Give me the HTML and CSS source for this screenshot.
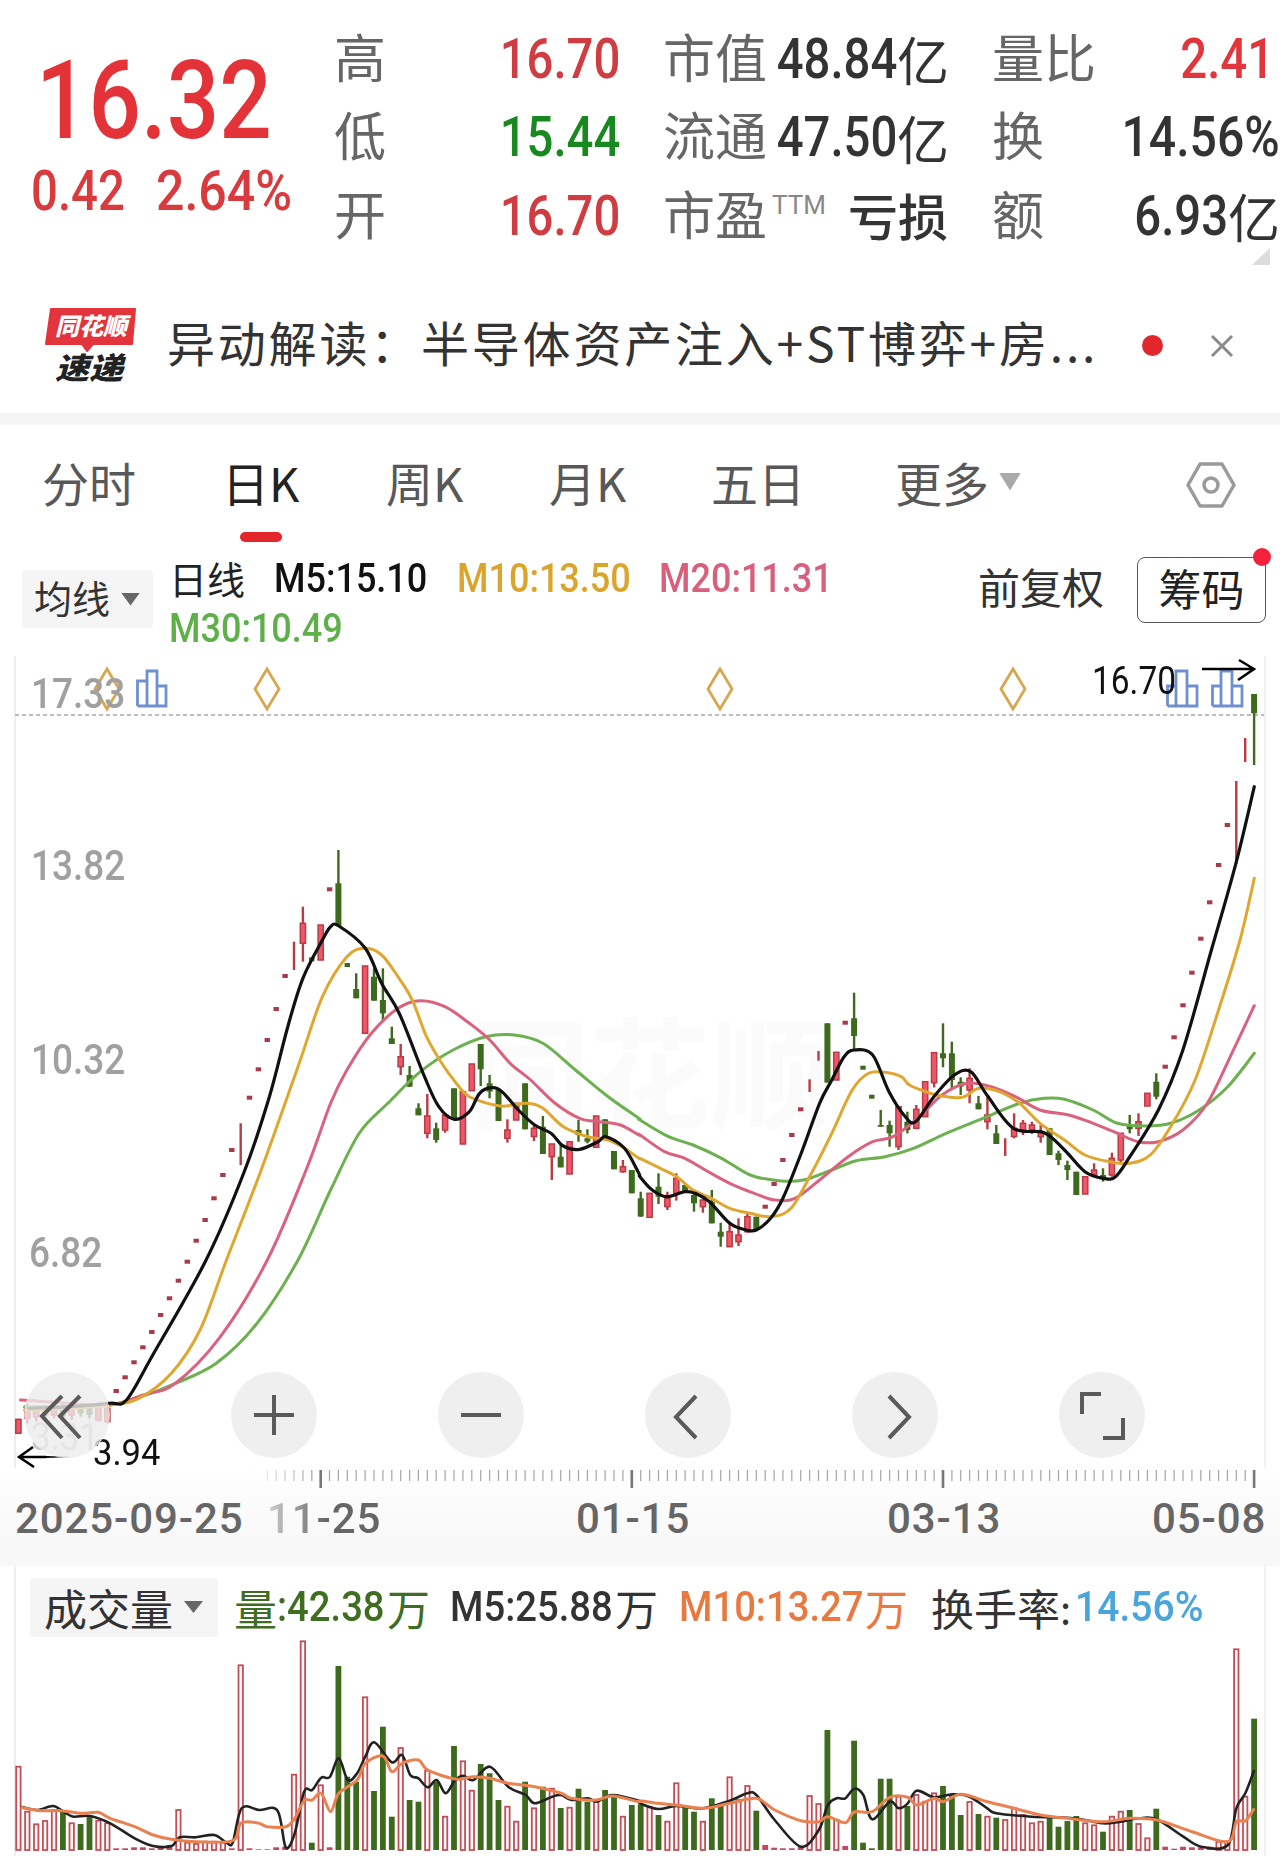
FILE: index.html
```html
<!DOCTYPE html>
<html lang="zh">
<head>
<meta charset="utf-8">
<title>行情</title>
<link rel="stylesheet" href="styles.css">
</head>
<body>
<div class="page">
  <section class="quote">
    <div class="price-box">
      <div class="num price">16.32</div>
      <div class="change"><span class="num chg chg-a">0.42</span><span class="num chg chg-b">2.64%</span></div>
    </div>
    <div class="stats">
      <div class="cell"><span class="lab">高</span><span class="val"><span class="num vn up">16.70</span></span></div>
      <div class="cell"><span class="lab">市值</span><span class="val"><span class="num vn">48.84</span><span class="yi">亿</span></span></div>
      <div class="cell"><span class="lab">量比</span><span class="val val-inset"><span class="num vn hot">2.41</span></span></div>
      <div class="cell"><span class="lab">低</span><span class="val"><span class="num vn down">15.44</span></span></div>
      <div class="cell"><span class="lab">流通</span><span class="val"><span class="num vn">47.50</span><span class="yi">亿</span></span></div>
      <div class="cell"><span class="lab">换</span><span class="val"><span class="num vn vn-wide">14.56%</span></span></div>
      <div class="cell"><span class="lab">开</span><span class="val"><span class="num vn up">16.70</span></span></div>
      <div class="cell"><span class="lab">市盈<span class="ttm">TTM</span></span><span class="val loss">亏损</span></div>
      <div class="cell"><span class="lab">额</span><span class="val"><span class="num vn">6.93</span><span class="yi">亿</span></span></div>
    </div>
    <i class="corner"></i>
  </section>

  <section class="banner">
    <svg class="logo" viewBox="0 0 91 80" aria-label="同花顺速递">
      <path class="logo-badge" d="M6 1H90L87 36H48L42 43L37 36H1Z"/>
      <text class="logo-top" x="10" y="27" textLength="72" lengthAdjust="spacingAndGlyphs">同花顺</text>
      <text class="logo-bot" x="10" y="71" textLength="68" lengthAdjust="spacingAndGlyphs">速递</text>
    </svg>
    <div class="banner-text">异动解读：半导体资产注入+ST博弈+房...</div>
    <i class="banner-dot"></i>
    <svg class="banner-x" viewBox="0 0 24 24"><path d="M2 2L22 22M22 2L2 22"/></svg>
  </section>
  <div class="strip"></div>

  <nav class="tabs">
    <span class="tab">分时</span>
    <span class="tab tab-on">日K</span>
    <span class="tab">周K</span>
    <span class="tab">月K</span>
    <span class="tab">五日</span>
    <span class="tab tab-more">更多<i class="tri-more"></i></span>
    <svg class="hex" viewBox="0 0 50 48"><path d="M2 24L14 3H36L48 24L36 45H14Z"/><circle cx="25" cy="24" r="7"/></svg>
  </nav>

  <section class="toolbar">
    <div class="pill pill-ma"><span>均线</span><i class="tri"></i></div>
    <div class="legend">
      <div class="legend-row">
        <span class="leg-day">日线</span>
        <span class="leg-slot s181"><span class="num lg">M5:15.10</span></span>
        <span class="leg-slot s201"><span class="num lg c-y">M10:13.50</span></span>
        <span class="leg-slot"><span class="num lg c-p">M20:11.31</span></span>
      </div>
      <div class="legend-row"><span class="num lg c-g">M30:10.49</span></div>
    </div>
    <div class="tool-right">
      <span class="adj">前复权</span>
      <span class="chips"><span class="chips-text">筹码</span></span>
    </div>
  </section>

  <section class="chart">
    <svg class="main-svg" id="mainSvg" viewBox="0 656 1280 812">
      <text class="wm" x="470" y="1120">同花顺</text>
      <line class="dash" x1="15" y1="715" x2="1264" y2="715"/>
      <g id="candles"></g>
      <g id="lines"></g>
      <g class="dia">
        <path d="M107 669L95 689L107 709L119 689Z"/>
        <path d="M267 669L255 689L267 709L279 689Z"/>
        <path d="M720 669L708 689L720 709L732 689Z"/>
        <path d="M1013 669L1001 689L1013 709L1025 689Z"/>
      </g>
      <g class="barsicon">
        <path d="M137.500 706V681H147V706M147 706V671H157V706M157 706V686H166V706H137.500"/>
        <path d="M1167.500 706V686H1176V706M1176 706V671H1187V706M1187 706V686H1197V706H1167.500"/>
        <path d="M1212.500 706V686H1221V706M1221 706V671H1232V706M1232 706V686H1242V706H1212.500"/>
      </g>
      <path class="arrow" d="M1202 669H1253M1239 660L1254 669L1238 680"/>
      <defs><linearGradient id="fadeArrow" x1="0" x2="1" y1="0" y2="0"><stop offset="0" stop-color="#000"/><stop offset="1" stop-color="#000" stop-opacity=".1"/></linearGradient></defs>
      <path class="arrow-back" d="M33 1447L19 1457L34 1467M20 1457H46"/>
      <rect class="arrow-tail" x="46" y="1456" width="24" height="2"/>
    </svg>
    <span class="num yl yl-1">17.33</span>
    <span class="num yl yl-2">13.82</span>
    <span class="num yl yl-3">10.32</span>
    <span class="num yl yl-4">6.82</span>
    <span class="num hi-label">16.70</span>
    <span class="num lo-ghost">3.31</span>
    <span class="num lo-label">3.94</span>
    <div class="controls">
      <span class="ctl ctl-ghost"><svg viewBox="0 0 86 86"><path d="M38 24L18 44L38 66M56 24L36 44L56 66"/></svg></span>
      <span class="ctl"><svg viewBox="0 0 86 86"><path d="M23 43H63M43 23V63"/></svg></span>
      <span class="ctl"><svg viewBox="0 0 86 86"><path d="M23 43H63"/></svg></span>
      <span class="ctl"><svg viewBox="0 0 86 86"><path d="M51 24L31 45L51 66"/></svg></span>
      <span class="ctl"><svg viewBox="0 0 86 86"><path d="M37 24L57 45L37 66"/></svg></span>
      <span class="ctl"><svg viewBox="0 0 86 86"><path d="M42 22H23V42M44 66H64V46"/></svg></span>
    </div>
  </section>

  <section class="axis">
    <svg class="ticks" id="ticks" viewBox="0 1468 1280 22"></svg>
    <div class="dates">
      <span class="date d1">2025-09-25</span>
      <span class="date d2">11-25</span>
      <span class="date d3">01-15</span>
      <span class="date d4">03-13</span>
      <span class="date">05-08</span>
    </div>
  </section>

  <section class="volume">
    <div class="vol-legend">
      <div class="pill pill-vol"><span>成交量</span><i class="tri"></i></div>
      <span class="vi vi-1 c-vol"><span class="vcjk">量</span><span class="num vnum w-110">:42.38</span><span class="vcjk">万</span></span>
      <span class="vi vi-2"><span class="num vnum w-165">M5:25.88</span><span class="vcjk">万</span></span>
      <span class="vi vi-3 c-ora"><span class="num vnum w-186">M10:13.27</span><span class="vcjk">万</span></span>
      <span class="vi vi-4"><span class="vcjk">换手率</span><span class="colon">:</span></span>
      <span class="vi c-blue"><span class="num vnum vnum-pct">14.56%</span></span>
    </div>
    <svg class="vol-svg" id="volSvg" viewBox="0 1640 1280 216"></svg>
  </section>
</div>
<script src="script.js"></script>
</body>
</html>
```
FILE: styles.css
```css
* { box-sizing: border-box; }
html, body { margin: 0; padding: 0; background: #fff; }
body { font-family: "Noto Sans CJK SC", "Noto Sans", sans-serif; color: #333; }
.page { width: 1280px; height: 1856px; overflow: hidden; }
i { display: block; }
.num { display: inline-block; font-family: Roboto, "Liberation Sans", sans-serif; white-space: nowrap; line-height: 1; }

/* quote header */
.quote { position: relative; display: flex; height: 270px; }
.price-box { width: 337px; flex: none; }
.price { display: block; margin: 46px 0 0 36px; font-size: 110px; line-height: 110px; font-weight: 500; color: #e33238; transform: scaleX(.84); transform-origin: left center; }
.change { display: flex; margin: 8px 0 0 31px; }
.chg { font-size: 55px; font-weight: 500; color: #d83a3e; transform-origin: left center; }
.chg-a { width: 125px; transform: scaleX(.86); }
.chg-b { transform: scaleX(.91); }
.stats { display: grid; grid-template-columns: 281px 283px 285px; grid-auto-rows: 78.5px; column-gap: 46px; padding-top: 20px; margin-left: -1px; }
.cell { display: flex; align-items: center; justify-content: space-between; }
.cell:nth-child(3n+1) .lab { margin-left: -2px; }
.lab { font-size: 52px; line-height: 1; color: #666; white-space: nowrap; display: flex; align-items: flex-start; margin-bottom: 7px; flex: none; }
.ttm { font-family: Roboto, sans-serif; font-size: 26px; line-height: 1; font-weight: 400; color: #888; margin: 5px 0 0 5px; }
.val { display: flex; align-items: center; color: #333; flex: none; margin-right: -3px; }
.val-inset { margin-right: 3px; }
.vn { font-size: 55px; font-weight: 500; margin-left: -40px; transform: scaleX(.86); transform-origin: right center; }
.vn-wide { transform: scaleX(.876); }
.up { color: #cf3d43; }
.down { color: #18891f; }
.hot { color: #e1363c; }
.yi { font-size: 52px; line-height: 1; color: #333; }
.loss { font-size: 50px; line-height: 1; font-weight: 500; margin: 0 -2px 4px 0; }
.corner { position: absolute; left: 1252px; top: 248px; width: 18px; height: 17px; background: #dcdcdc; clip-path: polygon(100% 0, 100% 100%, 0 100%); }

/* banner */
.banner { display: flex; align-items: center; height: 143px; padding: 0 46px 0 45px; }
.logo { width: 91px; height: 80px; flex: none; margin-top: 13px; overflow: visible; }
.logo-badge { fill: #e2343a; stroke: #e2343a; stroke-width: 2; stroke-linejoin: round; }
.logo-top { font-size: 24px; font-weight: 900; font-style: italic; fill: #fff; }
.logo-bot { font-size: 30px; font-weight: 900; font-style: italic; fill: #222; }
.banner-text { flex: 1; min-width: 0; margin-left: 31px; font-size: 48px; letter-spacing: 2.800px; line-height: 1.2; color: #333; white-space: nowrap; }
.banner-dot { width: 21px; height: 21px; margin-top: 8px; border-radius: 50%; background: #e3262b; flex: none; }
.banner-x { width: 24px; height: 24px; margin: 8px 0 0 47px; flex: none; }
.banner-x path { fill: none; stroke: #8a8a8a; stroke-width: 3; }
.strip { height: 12px; background: #f5f5f5; }

/* tabs */
.tabs { display: grid; grid-template-columns: 180px 164px 163px 162px 184px 291px 50px; align-items: start; height: 120px; padding: 33px 0 0 42px; }
.tab { position: relative; font-size: 47px; line-height: 48px; color: #585858; white-space: nowrap; }
.tab-on { color: #222; }
.tab-on::after { content: ""; position: absolute; left: 18px; top: 74px; width: 42px; height: 10px; border-radius: 5px; background: #e3262b; }
.tab-more { display: flex; align-items: center; }
.tri-more { width: 22px; height: 18px; margin: 0 0 1px 10px; background: #aaa; clip-path: polygon(0 0, 100% 0, 50% 100%); }
.hex { width: 50px; height: 48px; margin-top: 3px; }
.hex path, .hex circle { fill: none; stroke: #9a9a9a; stroke-width: 3.500; stroke-linejoin: round; }

/* toolbar */
.toolbar { display: flex; align-items: flex-start; height: 111px; padding: 0 14px 0 22px; }
.pill { display: flex; align-items: center; background: #f5f5f5; border-radius: 4px; color: #333; }
.tri { background: #666; clip-path: polygon(0 0, 100% 0, 50% 100%); }
.pill-ma { width: 131px; height: 58px; margin-top: 25px; padding: 0 0 4px 12px; font-size: 38px; line-height: 1; }
.pill-ma .tri { width: 19px; height: 13px; margin: 4px 0 0 11px; }
.legend { margin: 9px 0 0 16px; }
.legend-row { display: flex; align-items: center; height: 50px; }
.leg-day { width: 105px; padding: 0 0 2px 0; font-size: 38px; line-height: 1; color: #222; }
.leg-slot { display: block; }
.s181 { width: 183px; }
.s201 { width: 202px; }
.lg { font-size: 40px; font-weight: 500; color: #111; transform: scaleX(.9); transform-origin: left center; }
.c-y { color: #dba52c; }
.c-p { color: #d9607d; }
.c-g { color: #5fb04a; }
.tool-right { display: flex; align-items: flex-start; margin: 12px 0 0 auto; }
.adj { font-size: 42px; line-height: 1; color: #333; margin: 8px 33px 0 0; }
.chips { position: relative; display: block; width: 129px; height: 66px; padding-top: 8px; text-align: center; border: 1.500px solid #555; border-radius: 8px; font-size: 43px; line-height: 1; color: #222; }
.chips::after { content: ""; position: absolute; right: -6px; top: -10px; width: 18px; height: 18px; border-radius: 50%; background: #f3213c; }

/* price chart */
.chart, .volume { background: linear-gradient(#eee, #eee) 14px 0 / 2px 100% no-repeat, linear-gradient(#f3f3f3, #f3f3f3) 1264px 0 / 2px 100% no-repeat, #fff; }
.chart { position: relative; height: 812px; }
.main-svg { display: block; width: 1280px; height: 812px; }
.wm { font-size: 120px; font-weight: 700; fill: #fbfbfb; }
.dash { stroke: #a8a8a8; stroke-width: 1.500; stroke-dasharray: 4 3; }
.dia path { fill: none; stroke: #d9a650; stroke-width: 2.800; }
.barsicon path { fill: none; stroke: #6f8fcf; stroke-width: 2.800; }
.arrow { fill: none; stroke: #000; stroke-width: 2.500; }
.arrow-back { fill: none; stroke: #000; stroke-width: 2.500; }
.arrow-tail { fill: url(#fadeArrow); }
.yl { position: absolute; font-size: 42px; font-weight: 500; color: #a0a0a0; transform: scaleX(.88); transform-origin: left center; }
.yl-1 { left: 31px; top: 17px; }
.yl-2 { left: 31px; top: 189px; }
.yl-3 { left: 31px; top: 383px; }
.yl-4 { left: 29px; top: 576px; }
.hi-label { position: absolute; left: 1092px; top: 6px; font-size: 38px; color: #111; transform: scaleX(.88); transform-origin: left center; }
.lo-label { position: absolute; left: 93px; top: 779px; font-size: 36px; color: #111; transform: scaleX(.96); transform-origin: left center; }
.lo-ghost { position: absolute; left: 31px; top: 762px; font-size: 38px; color: #c9c9c9; transform: scaleX(.92); transform-origin: left center; }
.controls { position: absolute; left: 24px; top: 716px; display: flex; gap: 121px; }
.ctl { display: block; width: 86px; height: 86px; border-radius: 50%; background: #efefef; }
.ctl-ghost { background: rgba(236, 236, 236, .8); }
.ctl svg { display: block; width: 86px; height: 86px; }
.ctl path { fill: none; stroke: #5a5a5a; stroke-width: 4; }

/* axis */
.axis { height: 98px; background: linear-gradient(#fff 0, #fbfbfb 40%, #f7f7f7 100%); }
.ticks { display: block; width: 1280px; height: 22px; }
.dates { display: flex; height: 58px; align-items: center; padding-left: 15px; }
.date { font-family: Roboto, sans-serif; font-size: 42px; font-weight: 500; line-height: 1; letter-spacing: .9px; color: #666; white-space: nowrap; }
.d1 { width: 252px; }
.d2 { width: 309px; -webkit-mask-image: linear-gradient(90deg, rgba(0,0,0,.3) 0, #000 60px); mask-image: linear-gradient(90deg, rgba(0,0,0,.3) 0, #000 60px); }
.d3 { width: 311px; }
.d4 { width: 265px; }

/* volume */
.volume { height: 290px; }
.vol-legend { display: flex; align-items: center; height: 74px; padding: 8px 0 0 30px; font-size: 43px; line-height: 1; }
.pill-vol { width: 188px; height: 59px; padding-left: 14px; margin-right: 16px; font-size: 43px; }
.pill-vol .tri { width: 19px; height: 12px; margin-left: 11px; }
.vi { display: flex; align-items: center; white-space: nowrap; color: #333; }
.vi-1 { width: 216px; }
.vi-2 { width: 229px; }
.vi-3 { width: 252px; }
.vi-4 { width: 144px; }
.vcjk { font-size: 43px; line-height: 1; }
.colon { font-size: 40px; line-height: 1; }
.vnum { font-size: 42px; font-weight: 500; transform: scaleX(.91); transform-origin: left center; }
.vnum-pct { transform: scaleX(.93); }
.w-110 { width: 110px; }
.w-165 { width: 165px; }
.w-186 { width: 186px; }
.c-vol { color: #3f6e22; }
.c-ora { color: #e87a41; }
.c-blue { color: #4aa5dc; }
.vol-svg { display: block; width: 1280px; height: 216px; }
```
FILE: script.js
```js
(function () {
  var NS = 640, STEP = 8.89, X0 = 18.4;
  var fx = function (i) { return X0 + i * STEP; };
  var py = function (y) { return 840 + y / 3; };
  var vy = function (z) { return 1560 + z / 3; };
  var L = function (a) { return a.map(function (p) { return [p[0] / 2.45, py(p[1])]; }); };
  var R = function (a) { return a.map(function (p) { return [NS + p[0] / 2.45, py(p[1])]; }); };
  var LV = function (a) { return a.map(function (p) { return [p[0] / 2.45, vy(p[1])]; }); };
  var RV = function (a) { return a.map(function (p) { return [NS + p[0] / 2.45, vy(p[1])]; }); };

  /* one entry per trading day: [high, top, bottom, low, colour] or a flat day [y, colour] */
  var c = [
    [1738,1738,1780,1780,'r'],[1690,1700,1735,1750,'r'],[1700,1710,1730,1745,'r'],[1695,1700,1725,1740,'r'],[1700,1705,1725,1735,'r'],
    [1690,1700,1730,1745,'g'],[1700,1705,1725,1740,'r'],[1690,1700,1720,1730,'g'],[1695,1705,1725,1735,'g'],[1690,1700,1740,1745,'r'],
    [1695,1705,1745,1750,'r'],
    [1653,'r'],[1612,'r'],[1567,'r'],[1522,'r'],[1476,'r'],[1425,'r'],[1375,'r'],[1322,'r'],[1265,'r'],[1202,'r'],[1140,'r'],[1075,'r'],[1005,'r'],[930,'r'],
    [850,850,975,975,'t'],[773,'r'],[688,'r'],[600,'r'],[507,'r'],[408,'r'],
    [305,305,390,390,'t'],[200,250,310,365,'r'],[358,'g'],[255,255,360,360,'r'],[148,'r'],
    [30,130,258,258,'g'],[375,'g'],[400,447,475,475,'g'],[378,378,580,580,'r'],[385,410,482,482,'g'],[385,480,520,545,'g'],[560,595,612,612,'g'],
    [612,650,680,705,'r'],[678,705,740,740,'g'],[790,805,826,826,'g'],[762,828,880,895,'r'],[848,865,900,908,'g'],[825,825,870,878,'r'],
    [745,745,835,835,'g'],[755,755,912,912,'r'],[672,672,752,752,'r'],[612,612,688,738,'g'],[705,730,755,775,'g'],[750,750,843,843,'g'],
    [838,870,895,908,'r'],[790,790,840,840,'r'],[730,730,868,868,'g'],[855,865,890,903,'r'],[828,860,942,942,'g'],[912,912,950,1020,'r'],
    [915,950,982,982,'g'],[905,905,1002,1002,'r'],[840,870,885,905,'g'],[868,895,905,910,'g'],[828,828,922,922,'r'],[838,838,895,895,'g'],
    [933,933,988,988,'g'],[960,980,995,998,'r'],[990,990,1060,1060,'g'],[1055,1075,1130,1130,'g'],
    [1060,1060,1132,1132,'r'],[1000,1040,1070,1092,'g'],[1055,1075,1100,1110,'r'],[1000,1015,1060,1082,'r'],[1030,1035,1052,1055,'g'],
    [1055,1065,1090,1115,'g'],[1070,1080,1100,1118,'r'],[1050,1085,1150,1150,'g'],[1148,1175,1190,1220,'g'],[1145,1175,1220,1220,'r'],
    [1135,1185,1205,1218,'r'],[1122,1130,1175,1178,'r'],[1130,1130,1170,1170,'g'],
    [1100,'r'],[1032,'r'],[960,'r'],[885,'r'],[808,'r'],[718,718,728,756,'t'],[633,633,642,662,'t'],
    [550,550,728,728,'g'],[637,637,720,720,'r'],[548,'r'],[458,535,588,630,'g'],[683,'g'],[770,'g'],
    [810,855,860,860,'g'],[842,855,880,920,'g'],[798,800,920,930,'r'],[815,845,870,880,'g'],[795,808,865,868,'r'],[725,725,830,830,'r'],
    [638,638,728,742,'r'],[550,640,655,682,'g'],[605,640,720,745,'g'],[712,725,740,765,'g'],[685,715,750,790,'r'],[768,790,808,808,'g'],
    [770,825,845,868,'r'],[855,880,912,912,'g'],[895,895,908,948,'t'],[820,865,890,895,'r'],[840,850,875,885,'r'],[845,855,870,882,'r'],
    [855,875,890,908,'r'],[865,865,945,945,'g'],[932,940,960,975,'g'],[962,975,990,1020,'g'],[995,995,1065,1065,'g'],[1010,1010,1062,1062,'r'],
    [970,990,1005,1010,'r'],[985,1005,1015,1025,'g'],[938,955,1005,1010,'r'],[880,880,960,970,'r'],[825,855,868,880,'g'],[820,845,865,888,'r'],
    [760,760,798,798,'r'],[700,725,770,778,'g'],
    [680,'r'],[592,'r'],[496,'r'],[398,'r'],[296,'r'],[187,'r'],[75,'r'],[-45,'r'],
    [-177,-177,72,72,'t'],[-306,-306,-234,-234,'t'],[-438,-438,-380,-225,'g']
  ];

  var v = [620,755,793,783,750,750,790,792,765,782,790,865,865,862,862,865,860,855,750,848,852,845,845,848,865,316,865,868,868,862,860,644,244,848,676,862,318,650,665,412,693,500,770,564,720,725,632,665,770,558,604,692,612,640,720,740,785,665,745,680,686,744,743,686,725,725,690,705,770,735,733,740,765,785,670,740,755,785,715,730,652,720,678,752,855,863,865,865,860,708,732,510,780,858,542,848,865,656,656,710,738,705,725,700,678,705,765,726,762,770,773,780,745,765,790,785,770,800,783,768,790,796,815,770,755,750,792,835,746,860,866,860,862,862,860,845,845,268,710,476];

  function smooth(pts) {
    var f = function (n) { return n.toFixed(1); };
    var d = 'M' + f(pts[0][0]) + ' ' + f(pts[0][1]);
    for (var i = 0; i < pts.length - 1; i++) {
      var p0 = pts[i - 1] || pts[i], p1 = pts[i], p2 = pts[i + 1], p3 = pts[i + 2] || p2;
      var c1x = p1[0] + (p2[0] - p0[0]) / 6, c1y = p1[1] + (p2[1] - p0[1]) / 6;
      var c2x = p2[0] - (p3[0] - p1[0]) / 6, c2y = p2[1] - (p3[1] - p1[1]) / 6;
      d += 'C' + f(c1x) + ' ' + f(c1y) + ' ' + f(c2x) + ' ' + f(c2y) + ' ' + f(p2[0]) + ' ' + f(p2[1]);
    }
    return d;
  }
  function rect(x, y, w, h, fill, stroke, sw) {
    return '<rect x="' + x.toFixed(1) + '" y="' + y.toFixed(1) + '" width="' + w.toFixed(1) + '" height="' + Math.max(h, .5).toFixed(1) + '" fill="' + fill + '"' + (stroke ? ' stroke="' + stroke + '" stroke-width="' + sw + '"' : '') + '/>';
  }

  var RED = '#b83c44', PINK = '#f0566a', GRN = '#3e6a1d', DOT = '#a93a4a';
  var out = '';
  c.forEach(function (k, i) {
    var x = fx(i);
    if (k.length === 2) {
      out += rect(x - 2.7, py(k[0]) - 2, 5.4, 4, k[1] === 'r' ? DOT : GRN);
      return;
    }
    var col = k[4], wick = col === 'g' ? GRN : RED;
    out += rect(x - 1.2, py(k[0]), 2.4, py(k[3]) - py(k[0]), wick);
    if (col === 'g') out += rect(x - 3, py(k[1]), 6, py(k[2]) - py(k[1]), GRN);
    else if (col === 'r') out += rect(x - 2.6, py(k[1]), 5.2, py(k[2]) - py(k[1]), PINK, RED, 1.5);
  });
  document.getElementById('candles').innerHTML = out;

  var ma = [
    ['#111', 3.2, L([[70,1705],[170,1700],[268,1690],[310,1680],[372,1550],[505,1260],[600,990],[660,770],[705,560],[742,415],[790,300],[810,260],[830,258],[895,325],[935,430],[980,525],[1040,710],[1075,800],[1113,838],[1150,815],[1175,760],[1205,743],[1230,755],[1270,810],[1310,855],[1350,880],[1380,918],[1420,928],[1465,905],[1485,890],[1530,925],[1565,1000]]).concat(R([[0,1010],[30,1050],[65,1070],[110,1055],[135,1060],[170,1085],[220,1150],[260,1170],[285,1170],[320,1135],[350,1075],[395,940],[440,790],[470,720],[500,650],[525,630],[570,645],[610,755],[650,830],[675,845],[720,770],[770,705],[810,695],[850,765],[915,865],[990,878],[1040,930],[1090,995],[1135,1015],[1165,1010],[1200,950],[1270,810],[1330,630],[1400,330],[1460,70],[1505,-160]]))],
    ['#dfa72f', 3, L([[60,1710],[170,1705],[270,1695],[340,1675],[420,1600],[490,1470],[555,1260],[640,990],[730,680],[790,470],[850,350],[895,325],[935,345],[975,410],[1010,480],[1045,590],[1080,665],[1115,725],[1150,770],[1225,798],[1290,790],[1330,805],[1380,860],[1440,890],[1490,900],[1530,925],[1565,955]]).concat(R([[0,955],[50,985],[90,1010],[130,1050],[175,1075],[220,1105],[270,1120],[320,1130],[370,1105],[420,1000],[470,880],[520,750],[560,700],[600,697],[640,710],[660,735],[700,755],[740,768],[790,772],[830,745],[880,755],[930,790],[980,850],[1040,900],[1090,945],[1150,965],[1200,970],[1250,945],[1300,860],[1360,720],[1420,500],[1470,300],[1505,115]]))],
    ['#d9637f', 3, L([[50,1680],[170,1690],[270,1695],[350,1665],[430,1630],[540,1490],[655,1260],[750,990],[810,790],[850,690],[910,580],[975,505],[1030,482],[1090,500],[1150,550],[1200,600],[1250,670],[1300,720],[1360,790],[1420,835],[1470,845],[1520,855],[1565,885]]).concat(R([[0,885],[60,935],[110,955],[160,990],[220,1030],[280,1060],[330,1080],[380,1075],[440,1020],[510,950],[570,905],[620,890],[680,835],[740,765],[800,730],[860,740],[920,770],[980,810],[1050,825],[1110,850],[1170,880],[1220,905],[1270,905],[1330,870],[1390,790],[1450,640],[1505,497]]))],
    ['#6cb04f', 3, L([[60,1700],[170,1700],[270,1695],[350,1668],[430,1630],[530,1570],[630,1450],[730,1260],[810,1050],[880,880],[950,790],[1030,695],[1110,630],[1190,590],[1260,585],[1330,610],[1410,690],[1490,770],[1565,835]]).concat(R([[0,840],[70,890],[130,915],[200,955],[270,1005],[340,1022],[400,1020],[470,990],[530,962],[600,950],[670,925],[750,880],[840,835],[930,790],[990,775],[1040,778],[1110,810],[1170,850],[1240,858],[1300,850],[1370,810],[1440,740],[1505,640]]))]
  ];
  var order = [3, 2, 1, 0], ml = '';
  order.forEach(function (n) {
    ml += '<path d="' + smooth(ma[n][2]) + '" fill="none" stroke="' + ma[n][0] + '" stroke-width="' + ma[n][1] + '" stroke-linejoin="round" stroke-linecap="round"/>';
  });
  document.getElementById('lines').innerHTML = ml;

  /* time axis ticks */
  var t = '';
  for (var i = 28; i < c.length; i++) {
    var big = i === 34 || i === 69 || i === 104 || i === 139;
    var op = i < 33 ? (i - 26) * .14 : 1;
    t += '<rect x="' + (fx(i) - (big ? 1.3 : .6)).toFixed(1) + '" y="1470" width="' + (big ? 2.6 : 1.2) + '" height="' + (big ? 18 : 11) + '" fill="' + (big ? '#777' : '#a5a5a5') + '" opacity="' + op.toFixed(2) + '"/>';
  }
  document.getElementById('ticks').innerHTML = t;

  /* volume */
  var base = vy(870), b = '';
  v.forEach(function (z, i) {
    var k = c[i], col = k[k.length - 1], x = fx(i), y = vy(z);
    if (col === 'g') b += rect(x - 2.9, y, 5.8, base - y, GRN);
    else if (base - y < 6) b += rect(x - 2.9, y, 5.8, base - y, '#c84860');
    else b += rect(x - 2.2, y, 4.4, base - y, '#fff8f8', '#bf5058', 1.8);
  });
  var m5 = LV([[50,740],[90,750],[130,738],[155,755],[180,770],[220,768],[270,790],[330,835],[375,858],[420,858],[440,832],[480,832],[525,825],[555,848],[570,848],[592,745],[635,750],[680,752],[700,862],[722,820],[745,695],[765,690],[787,653],[808,651],[830,595],[852,660],[875,640],[895,590],[917,547],[960,607],[985,585],[1005,645],[1025,655],[1048,682],[1070,660],[1092,700],[1115,660],[1135,647],[1160,660],[1200,620],[1245,680],[1288,705],[1310,730],[1353,710],[1375,705],[1400,720],[1440,715],[1462,725],[1500,705],[1565,722]]).concat(RV([[0,730],[45,747],[89,738],[155,745],[220,722],[263,700],[285,705],[330,780],[394,860],[438,810],[460,735],[482,715],[503,715],[525,686],[547,705],[569,778],[612,725],[634,745],[656,730],[678,692],[721,712],[765,703],[807,710],[851,745],[873,760],[960,770],[1047,773],[1091,780],[1135,790],[1178,785],[1222,775],[1266,778],[1331,830],[1375,860],[1440,855],[1461,745],[1483,700],[1505,630]]));
  var m10 = LV([[50,742],[100,752],[150,752],[200,760],[240,757],[270,775],[330,800],[375,825],[420,838],[480,845],[570,842],[590,790],[630,788],[655,800],[700,800],[722,775],[745,722],[765,720],[787,700],[810,755],[830,700],[875,660],[895,610],[938,588],[960,635],[985,610],[1025,600],[1048,630],[1115,657],[1160,650],[1200,655],[1245,670],[1310,680],[1375,700],[1400,715],[1462,720],[1500,708],[1565,725]]).concat(RV([[0,722],[45,730],[89,735],[155,745],[220,730],[285,715],[330,750],[394,782],[438,785],[460,770],[503,788],[525,756],[569,755],[612,712],[656,712],[678,735],[721,715],[743,725],[787,703],[851,725],[917,745],[982,765],[1047,775],[1135,785],[1200,775],[1266,780],[1353,815],[1440,845],[1461,785],[1483,783],[1505,745]]));
  b += '<path d="' + smooth(m5) + '" fill="none" stroke="#222" stroke-width="2.600" stroke-linejoin="round"/>';
  b += '<path d="' + smooth(m10) + '" fill="none" stroke="#e98150" stroke-width="3" stroke-linejoin="round"/>';
  document.getElementById('volSvg').innerHTML = b;
})();
```
